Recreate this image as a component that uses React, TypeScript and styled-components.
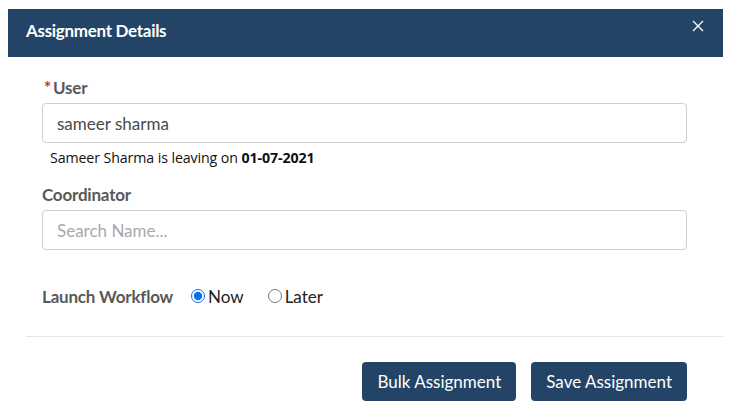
import styled, { createGlobalStyle } from 'styled-components'

const GlobalStyle = createGlobalStyle`
  html, body {
    margin: 0;
    padding: 0;
    background: #fff;
  }
  body {
    font-family: Lato, "Liberation Sans", sans-serif;
  }
`

const Dialog = styled.div`
  width: 715px;
  margin: 9px 0 0 8px;
  background: #fff;
`

const Header = styled.header`
  height: 48px;
  display: flex;
  align-items: center;
  justify-content: space-between;
  padding: 0 15px 0 18px;
  background: #234467;
  color: #fff;
`

const Title = styled.h2`
  margin: 0 0 6px;
  font-size: 17px;
  font-weight: 700;
  letter-spacing: -0.3px;
`

const CloseButton = styled.button`
  display: flex;
  align-items: center;
  justify-content: center;
  width: 20px;
  height: 20px;
  margin-top: -14px;
  padding: 0;
  border: 0;
  background: transparent;
  color: #fff;
  cursor: pointer;
`

const Body = styled.div`
  display: flex;
  flex-direction: column;
  padding: 20px 36px 0 34px;
`

const Field = styled.div<{ $gap?: number }>`
  display: flex;
  flex-direction: column;
  margin-bottom: ${(p) => p.$gap ?? 0}px;
`

const Label = styled.label<{ $top?: number }>`
  display: flex;
  align-items: baseline;
  gap: 2px;
  height: 22px;
  margin: ${(p) => p.$top ?? 0}px 0 4px;
  font-size: 17px;
  font-weight: 700;
  color: #595959;
  letter-spacing: -0.2px;
`

const Required = styled.span`
  color: #e01e1e;
  font-size: 17px;
  margin-left: 2px;
`

const Input = styled.input`
  box-sizing: border-box;
  width: 100%;
  height: 40px;
  padding: 0 14px;
  border: 1px solid #cfcfcf;
  border-radius: 4px;
  font-family: Lato, sans-serif;
  font-size: 17px;
  color: #4a4a4a;
  outline: none;

  &::placeholder {
    color: #a9a9a9;
  }
`

const Note = styled.p`
  margin: 5px 0 0 8px;
  font-family: "Open Sans", sans-serif;
  font-size: 14.2px;
  letter-spacing: -0.1px;
  color: #111;

  strong {
    font-weight: 700;
  }
`

const RadioRow = styled.div`
  display: flex;
  align-items: center;
  height: 24px;
`

const RadioLabel = styled.span`
  font-size: 17px;
  font-weight: 700;
  color: #595959;
  letter-spacing: -0.2px;
  margin-right: 18px;
`

const RadioOption = styled.label`
  display: flex;
  align-items: center;
  gap: 2px;
  margin-right: 24px;
  font-size: 17px;
  color: #222;
  cursor: pointer;

  input {
    width: 14px;
    height: 14px;
    margin: 0 1px 0 0;
    accent-color: #0a72e8;
  }
`

const Footer = styled.footer`
  margin: 28px 0 0 18px;
  padding: 25px 36px 8px 0;
  border-top: 1px solid #e6e6e6;
  display: flex;
  justify-content: flex-end;
  gap: 15px;
`

const Button = styled.button`
  height: 39px;
  padding: 0 15px;
  border: 0;
  border-radius: 4px;
  background: #234467;
  color: #fff;
  font-family: Lato, sans-serif;
  font-size: 17px;
  cursor: pointer;
`

function App() {
  return (
    <>
      <GlobalStyle />
      <Dialog>
        <Header>
          <Title>Assignment Details</Title>
          <CloseButton aria-label="Close">
            <svg width="12" height="12" viewBox="0 0 12 12" fill="none" stroke="currentColor" strokeWidth="1.3">
              <path d="M1 1 L11 11 M11 1 L1 11" />
            </svg>
          </CloseButton>
        </Header>
        <Body>
          <Field>
            <Label>
              <Required>*</Required>User
            </Label>
            <Input defaultValue="sameer sharma" />
            <Note>
              Sameer Sharma is leaving on <strong>01-07-2021</strong>
            </Note>
          </Field>
          <Field $gap={34}>
            <Label $top={17}>Coordinator</Label>
            <Input placeholder="Search Name..." />
          </Field>
          <RadioRow>
            <RadioLabel>Launch Workflow</RadioLabel>
            <RadioOption>
              <input type="radio" name="launch" defaultChecked />
              Now
            </RadioOption>
            <RadioOption>
              <input type="radio" name="launch" />
              Later
            </RadioOption>
          </RadioRow>
        </Body>
        <Footer>
          <Button>Bulk Assignment</Button>
          <Button>Save Assignment</Button>
        </Footer>
      </Dialog>
    </>
  )
}

export default App
